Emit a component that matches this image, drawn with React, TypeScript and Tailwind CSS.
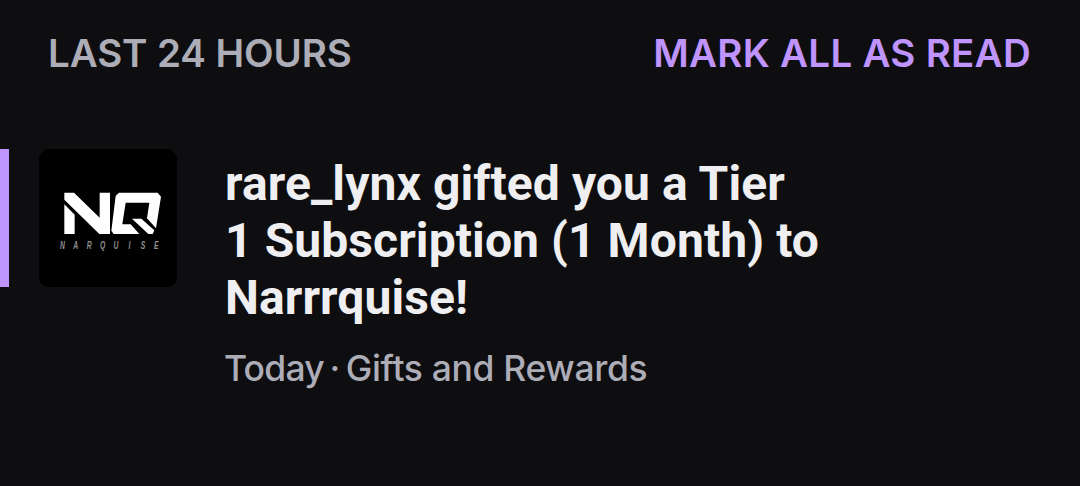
type Notification = {
  id: string
  lines: string[]
  date: string
  category: string
  unread: boolean
}

const notifications: Notification[] = [
  {
    id: '1',
    lines: ['rare_lynx gifted you a Tier', '1 Subscription (1 Month) to', 'Narrrquise!'],
    date: 'Today',
    category: 'Gifts and Rewards',
    unread: true,
  },
]

const subtitle = [...'NARQUISE']

const ChannelLogo = () => (
  <svg viewBox="0 0 414 414" className="size-[138px] rounded-[10px] bg-black">
    <g fill="#fff">
      <path d="M76 131H105L182 206V131H213V255H181L76 152Z" />
      <path d="M76 166L107 197V255H76Z" />
      <path d="M240 131H356L366 143L351 238L324 208L331 161H260L250 226H275L301 255H224L217 245L230 141Z" />
      <path d="M279 209H307L346 244L341 255H328Z" />
    </g>
    <g fill="#8f8f8f" fontFamily="Liberation Sans, sans-serif" fontSize="34" fontWeight="bold" fontStyle="italic" textAnchor="middle">
      {subtitle.map((letter, i) => (
        <text key={i} transform={`translate(${70 + i * 40.3} 299) scale(0.6 1)`}>
          {letter}
        </text>
      ))}
    </g>
  </svg>
)

export default function App() {
  return (
    <main className="h-[486px] w-[1080px] overflow-hidden bg-[#0e0e10] font-['Inter',sans-serif]">
      <header className="flex h-[149px] items-start justify-between pt-[29px] pr-[49px] pl-12 text-[38.5px] leading-12 font-semibold">
        <h1 className="tracking-[-0.1px] whitespace-nowrap text-[#adadb8]">LAST 24 HOURS</h1>
        <button className="tracking-[0.28px] whitespace-nowrap text-[#bf94ff]">MARK ALL AS READ</button>
      </header>

      {notifications.map(n => (
        <article key={n.id} className="flex items-start">
          <div className={n.unread ? 'h-[138px] w-[9px] bg-[#bf94ff]' : 'h-[138px] w-[9px]'} />
          <div className="ml-[30px]">
            <ChannelLogo />
          </div>
          <div className="ml-12 pt-[6px] whitespace-nowrap">
            <h2 className="font-['Roboto',sans-serif] text-5xl leading-[57px] font-bold tracking-[0.09px] text-[#efeff1]">
              {n.lines.map(line => (
                <span key={line} className="block">{line}</span>
              ))}
            </h2>
            <p className="-ml-px mt-[21px] flex text-[35.5px] leading-11 font-[450] text-[#adadb8]">
              <span className="tracking-[-0.8px]">{n.date}</span>
              <span className="w-[22px] text-center">·</span>
              <span className="tracking-[-0.35px]">{n.category}</span>
            </p>
          </div>
        </article>
      ))}
    </main>
  )
}
